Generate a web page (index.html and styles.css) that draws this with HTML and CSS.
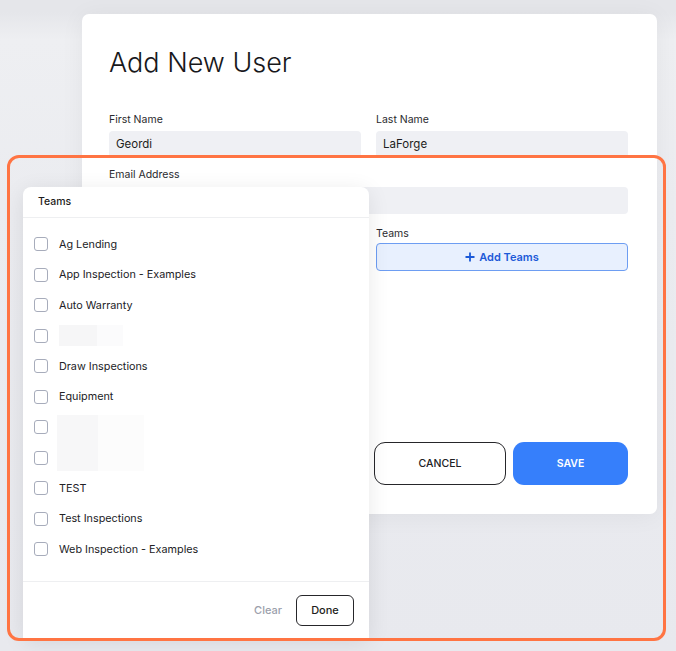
FILE: index.html
```html
<!DOCTYPE html>
<html>
<head>
<meta charset="utf-8">
<link rel="stylesheet" href="styles.css">
</head>
<body>
<div class="backdrop">
  <div class="card">
    <h1 class="title">Add New User</h1>
    <div class="form">
      <div class="field">
        <div class="label">First Name</div>
        <div class="input">Geordi</div>
      </div>
      <div class="field">
        <div class="label">Last Name</div>
        <div class="input">LaForge</div>
      </div>
      <div class="field wide">
        <div class="label">Email Address</div>
        <div class="input"></div>
      </div>
      <div class="field"></div>
      <div class="field">
        <div class="label teams-label">Teams</div>
        <button class="add-teams"><svg width="10" height="10" viewBox="0 0 10 10"><path d="M5 0.5V9.5M0.5 5H9.5" stroke="#1c5ad8" stroke-width="1.8"/></svg>Add Teams</button>
      </div>
    </div>
    <div class="actions">
      <button class="btn cancel">CANCEL</button>
      <button class="btn save">SAVE</button>
    </div>
  </div>

  <div class="dropdown">
    <div class="dd-head">Teams</div>
    <ul class="dd-list">
      <li><span class="cb"></span><span>Ag Lending</span></li>
      <li><span class="cb"></span><span>App Inspection - Examples</span></li>
      <li><span class="cb"></span><span>Auto Warranty</span></li>
      <li><span class="cb"></span><span class="redact r1"><i></i><i></i></span></li>
      <li><span class="cb"></span><span>Draw Inspections</span></li>
      <li><span class="cb"></span><span>Equipment</span></li>
      <li class="tall"><span class="cbs"><span class="cb"></span><span class="cb"></span></span><span class="redact r2"><i></i><i></i></span></li>
      <li><span class="cb"></span><span>TEST</span></li>
      <li><span class="cb"></span><span>Test Inspections</span></li>
      <li><span class="cb"></span><span>Web Inspection - Examples</span></li>
    </ul>
    <div class="dd-foot">
      <span class="clear">Clear</span>
      <button class="done">Done</button>
    </div>
  </div>

  <div class="highlight"></div>
</div>
</body>
</html>
```

FILE: styles.css
```css
* { box-sizing: border-box; }
html, body { margin: 0; padding: 0; }
body {
  font-family: Inter, "Noto Sans", sans-serif;
  background: #ebecf0;
  color: #1f1f22;
  width: 676px;
  height: 651px;
  overflow: hidden;
}
.backdrop {
  position: relative;
  width: 676px;
  height: 651px;
  padding: 14px 0 0 82px;
  background: linear-gradient(180deg, #e5e6ea 0, #e5e6ea 12px, #eeeff2 40px, #ebecf0 200px, #e8e9ee 651px);
}
.card {
  width: 575px;
  height: 500px;
  background: #fff;
  border-radius: 7px;
  box-shadow: 0 2px 24px rgba(0,0,0,0.05);
  padding: 30px 29px 0 27px;
  display: flex;
  flex-direction: column;
}
.title {
  margin: 0 0 31px 0;
  font-size: 27px;
  font-weight: 300;
  line-height: 38px;
  color: #18181b;
  letter-spacing: 0;
}
.form {
  display: grid;
  grid-template-columns: 252px 252px;
  column-gap: 15px;
}
.field { margin-bottom: 10px; }
.field.wide { grid-column: 1 / 3; }
.label {
  font-size: 10.5px;
  line-height: 14px;
  margin-bottom: 4px;
  color: #2a2a2e;
}
.field.wide .label { margin-bottom: 5px; }
.teams-label {
  line-height: 15px;
  margin-top: 2px;
  margin-bottom: 2px;
}
.input {
  height: 27px;
  border-radius: 4px;
  background: #eff0f4;
  font-size: 11.5px;
  line-height: 27px;
  padding-left: 7px;
  color: #1d1d20;
}
.add-teams {
  width: 252px;
  height: 28px;
  border: 1px solid #6d9df2;
  border-radius: 4px;
  background: #e8f0fe;
  color: #1c5ad8;
  font-family: inherit;
  font-size: 11px;
  font-weight: 600;
  display: flex;
  align-items: center;
  justify-content: center;
  gap: 4px;
  padding: 0 0 1px 0;
}
.actions {
  display: flex;
  justify-content: flex-end;
  gap: 7px;
  margin-top: 161px;
}
.btn {
  height: 43px;
  border-radius: 11px;
  font-family: inherit;
  font-size: 10.5px;
  font-weight: 500;
  padding: 0;
}
.cancel {
  width: 132px;
  background: #fff;
  border: 1px solid #26262a;
  color: #202024;
}
.save {
  width: 115px;
  background: #367ffb;
  border: none;
  color: #fff;
  font-weight: 600;
}
.dropdown {
  position: absolute;
  left: 23px;
  top: 187px;
  width: 346px;
  height: 451px;
  background: #fff;
  border-radius: 8px 8px 0 0;
  box-shadow: 0 4px 22px rgba(0,0,0,0.09);
  display: flex;
  flex-direction: column;
}
.dd-head {
  height: 31px;
  padding-left: 15px;
  font-size: 10.5px;
  font-weight: 500;
  line-height: 29px;
  border-bottom: 1px solid #eeeff1;
  color: #1d1d20;
}
.dd-list {
  list-style: none;
  margin: 0;
  padding: 11px 0 0 11px;
  flex: 1;
}
.dd-list li {
  height: 30.5px;
  display: flex;
  align-items: center;
  gap: 11px;
  font-size: 10.8px;
  color: #222226;
}
.dd-list li.tall {
  height: 61px;
  gap: 9px;
}
.cbs {
  display: flex;
  flex-direction: column;
  gap: 16.5px;
}
.cb {
  display: block;
  width: 14px;
  height: 14px;
  border: 1px solid #a7acbb;
  border-radius: 3px;
  flex: none;
}
.redact { display: flex; }
.redact i { display: block; }
.r1 i:first-child { width: 38px; height: 21px; background: #f6f6f7; }
.r1 i:last-child { width: 26px; height: 21px; background: #fbfbfc; }
.r2 i:first-child { width: 41px; height: 56px; background: #f7f7f8; }
.r2 i:last-child { width: 46px; height: 56px; background: #fcfcfc; }
.dd-foot {
  height: 57px;
  border-top: 1px solid #eeeff1;
  display: flex;
  align-items: center;
  justify-content: flex-end;
  gap: 14px;
  padding-right: 15px;
}
.clear {
  font-size: 11px;
  font-weight: 500;
  color: #9ba0ab;
}
.done {
  width: 58px;
  height: 31px;
  border: 1px solid #26262a;
  border-radius: 6px;
  background: #fff;
  font-family: inherit;
  font-size: 11px;
  font-weight: 500;
  color: #1d1d20;
  padding: 0;
}
.highlight {
  position: absolute;
  left: 7px;
  top: 155px;
  width: 659px;
  height: 486px;
  border: 3px solid #ff7443;
  border-radius: 12px;
  pointer-events: none;
}
```
